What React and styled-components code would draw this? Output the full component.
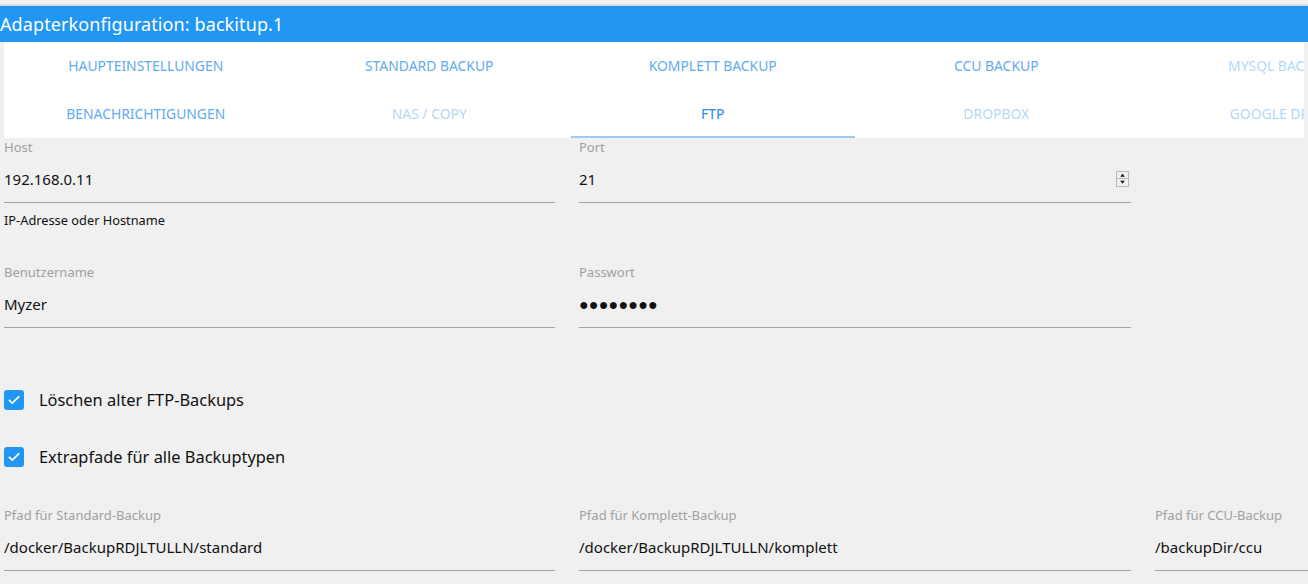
import React from "react"
import styled, { createGlobalStyle } from "styled-components"

const GlobalStyle = createGlobalStyle`
    html, body {
        margin: 0;
        padding: 0;
        background: #f0f0f0;
        overflow: hidden;
    }
    body {
        font-family: 'Noto Sans', 'Open Sans', sans-serif;
    }
`

const Page = styled.div`
    width: 1308px;
    height: 584px;
    overflow: hidden;
    background: #f0f0f0;
`

const TopStrip = styled.div`
    height: 6px;
    background: #f2f2f2;
    box-shadow: inset 0 -2px 0 #dcdcdc;
`

const TitleBar = styled.div`
    height: 36px;
    background: #2196f3;
    color: #ffffff;
    display: flex;
    align-items: center;
    font-size: 18px;
    letter-spacing: 0.1px;
`

const TabsBox = styled.div`
    margin: 0 4px;
    background: #ffffff;
    overflow: hidden;
`

const TabRow = styled.div`
    display: flex;
    width: 1418px;
`

const Tab = styled.div`
    flex: 0 0 283.5px;
    height: 48px;
    box-sizing: border-box;
    display: flex;
    align-items: center;
    justify-content: center;
    font-size: 13.9px;
    text-transform: uppercase;
    color: ${p => p.$active ? '#2a89e4' : p.$disabled ? '#b4d8f8' : '#62abef'};
    border-bottom: 2px solid ${p => p.$active ? '#9ccbf3' : 'transparent'};
    white-space: nowrap;
`

const Form = styled.div`
    padding: 1px 0 0 4px;
`

const Grid = styled.div`
    display: grid;
    grid-template-columns: 551px 552px 552px;
    column-gap: 24px;
    margin-top: ${p => p.$top || 0}px;
`

const Field = styled.div`
    display: flex;
    flex-direction: column;
`

const Label = styled.div`
    font-size: 13px;
    line-height: 16px;
    color: #a0a0a0;
`

const Value = styled.div`
    height: 48px;
    box-sizing: border-box;
    display: flex;
    align-items: center;
    justify-content: space-between;
    font-size: 15px;
    color: #111111;
    border-bottom: 1px solid #a3a3a3;
`

const Password = styled.span`
    font-size: 16px;
    letter-spacing: 0.2px;
`

const Helper = styled.div`
    margin-top: 9px;
    font-size: 12.8px;
    line-height: 16px;
    color: #111111;
`

const Spinner = styled.div`
    width: 13px;
    height: 16px;
    margin-right: 2px;
    box-sizing: border-box;
    border: 1px solid #b8b8b8;
    display: flex;
    flex-direction: column;
    svg { display: block; flex: 1; }
    svg + svg { border-top: 1px solid #b8b8b8; }
`

const CheckRow = styled.div`
    height: 57px;
    display: flex;
    align-items: center;
    gap: 15px;
    font-size: 16.4px;
    color: #111111;
`

const CheckBox = styled.div`
    width: 20px;
    height: 20px;
    border-radius: 3px;
    background: #2196f3;
    display: flex;
    align-items: center;
    justify-content: center;
`

const Checks = styled.div`
    margin-top: 43px;
`

const tabsTop = [
    { name: 'Haupteinstellungen' },
    { name: 'Standard Backup' },
    { name: 'Komplett Backup' },
    { name: 'CCU Backup' },
    { name: 'MySQL Backup', disabled: true },
]

const tabsBottom = [
    { name: 'Benachrichtigungen' },
    { name: 'NAS / Copy', disabled: true },
    { name: 'FTP', active: true },
    { name: 'Dropbox', disabled: true },
    { name: 'Google Drive', disabled: true },
]

const Check = ({ label }) => (
    <CheckRow>
        <CheckBox>
            <svg width="14" height="14" viewBox="0 0 24 24">
                <path d="M4 12.5l5 5L20 6.5" fill="none" stroke="#fff" strokeWidth="3" strokeLinecap="round" strokeLinejoin="round" />
            </svg>
        </CheckBox>
        <span>{label}</span>
    </CheckRow>
)

const Arrow = ({ up }) => (
    <svg viewBox="0 0 11 7" width="11" height="7">
        <path d={up ? "M3 5h5L5.5 2z" : "M3 2h5L5.5 5z"} fill="#111" />
    </svg>
)

export default function App() {
    return (
        <Page>
            <GlobalStyle />
            <TopStrip />
            <TitleBar>Adapterkonfiguration: backitup.1</TitleBar>
            <TabsBox>
                <TabRow>
                    {tabsTop.map(t => <Tab key={t.name} $disabled={t.disabled}>{t.name}</Tab>)}
                </TabRow>
                <TabRow>
                    {tabsBottom.map(t => <Tab key={t.name} $disabled={t.disabled} $active={t.active}>{t.name}</Tab>)}
                </TabRow>
            </TabsBox>
            <Form>
                <Grid>
                    <Field>
                        <Label>Host</Label>
                        <Value>192.168.0.11</Value>
                        <Helper>IP-Adresse oder Hostname</Helper>
                    </Field>
                    <Field>
                        <Label>Port</Label>
                        <Value>
                            21
                            <Spinner><Arrow up /><Arrow /></Spinner>
                        </Value>
                    </Field>
                </Grid>
                <Grid $top={36}>
                    <Field>
                        <Label>Benutzername</Label>
                        <Value>Myzer</Value>
                    </Field>
                    <Field>
                        <Label>Passwort</Label>
                        <Value><Password>●●●●●●●●</Password></Value>
                    </Field>
                </Grid>
                <Checks>
                    <Check label="Löschen alter FTP-Backups" />
                    <Check label="Extrapfade für alle Backuptypen" />
                </Checks>
                <Grid $top={22}>
                    <Field>
                        <Label>Pfad für Standard-Backup</Label>
                        <Value>/docker/BackupRDJLTULLN/standard</Value>
                    </Field>
                    <Field>
                        <Label>Pfad für Komplett-Backup</Label>
                        <Value>/docker/BackupRDJLTULLN/komplett</Value>
                    </Field>
                    <Field>
                        <Label>Pfad für CCU-Backup</Label>
                        <Value>/backupDir/ccu</Value>
                    </Field>
                </Grid>
            </Form>
        </Page>
    )
}
